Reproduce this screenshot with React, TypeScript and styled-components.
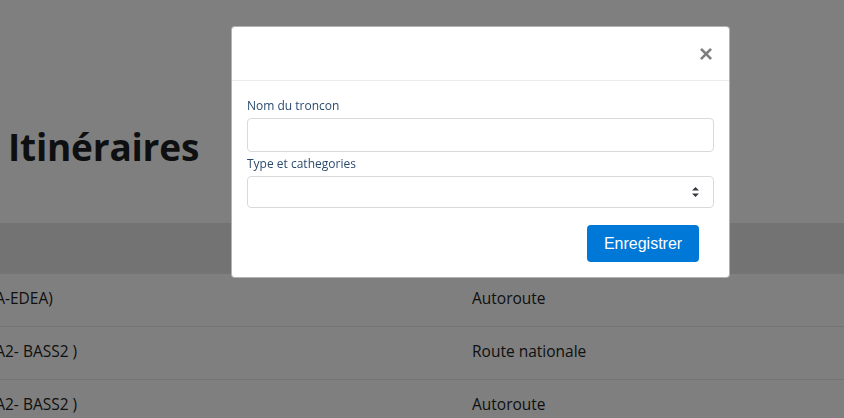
import React from 'react';
import styled, { createGlobalStyle } from 'styled-components';

const GlobalStyle = createGlobalStyle`
  html, body {
    margin: 0;
    padding: 0;
    background: #ffffff;
    overflow: hidden;
  }
  body {
    font-family: "Open Sans", "Noto Sans", sans-serif;
    color: #212529;
  }
`;

const Page = styled.div`
  width: 844px;
  height: 418px;
  overflow: hidden;
`;

const Title = styled.h1`
  margin: 0;
  padding: 119px 0 0 8px;
  height: 223px;
  box-sizing: border-box;
  font-size: 37px;
  font-weight: 700;
  line-height: 56px;
  letter-spacing: -0.2px;
  color: #1d1f22;
`;

const Table = styled.table`
  width: 100%;
  border-collapse: collapse;
  font-size: 15.5px;
`;

const HeadRow = styled.tr`
  background: #e6e6e6;
  height: 50px;
`;

const Row = styled.tr`
  height: 53px;
  border-top: 1px solid #e8e8e8;
`;

const Cell = styled.td<{ $w?: number }>`
  padding: 0 0 4px;
  width: ${(p) => (p.$w ? `${p.$w}px` : 'auto')};
  vertical-align: middle;
  white-space: nowrap;
  color: #222;
`;

// the part of the first column that lies left of the window
const Clipped = styled.span<{ $w: number }>`
  display: inline-flex;
  justify-content: flex-end;
  width: ${(p) => p.$w}px;
  overflow: hidden;
  vertical-align: bottom;
`;

const Backdrop = styled.div`
  position: fixed;
  inset: 0;
  background: rgba(0, 0, 0, 0.5);
`;

const Dialog = styled.div`
  position: fixed;
  left: 231px;
  top: 26px;
  width: 499px;
  background: #ffffff;
  border: 1px solid rgba(0, 0, 0, 0.3);
  border-radius: 4px;
  box-sizing: border-box;
`;

const DialogHeader = styled.div`
  height: 54px;
  display: flex;
  align-items: center;
  justify-content: flex-end;
  padding: 0 16px 0 15px;
  border-bottom: 1px solid #e9ecef;
  box-sizing: border-box;
`;

const Close = styled.button`
  border: 0;
  background: transparent;
  padding: 0;
  font-family: "Liberation Sans", Arial, sans-serif;
  font-size: 24px;
  font-weight: 700;
  line-height: 1;
  color: #000;
  opacity: 0.5;
  cursor: pointer;
`;

const DialogBody = styled.div`
  padding: 15px 15px 15px;
`;

const Label = styled.label`
  display: block;
  font-family: "Open Sans", "Noto Sans", sans-serif;
  font-size: 12px;
  line-height: 19px;
  color: #2b4a6f;
  margin-bottom: 3px;
`;

const Input = styled.input`
  display: block;
  width: 100%;
  height: 34px;
  box-sizing: border-box;
  border: 1px solid #d9d9d9;
  border-radius: 4px;
  margin-bottom: 2px;
`;

const Select = styled.div`
  height: 32px;
  box-sizing: border-box;
  border: 1px solid #d9d9d9;
  border-radius: 4px;
  display: flex;
  align-items: center;
  justify-content: flex-end;
  padding-right: 14px;
`;

const Footer = styled.div`
  display: flex;
  justify-content: flex-end;
  padding: 17px 15px 0 0;
`;

const Button = styled.button`
  width: 112px;
  height: 37px;
  border: 0;
  border-radius: 4px;
  background: #0078d7;
  color: #ffffff;
  font-family: "Liberation Sans", Arial, sans-serif;
  font-size: 16px;
  cursor: pointer;
`;

const rows = [
  { pre: '(DOUALA', post: '-EDEA)', type: 'Autoroute' },
  { pre: '( BONAMBA', post: '2- BASS2 )', type: 'Route nationale' },
  { pre: '( BONAMBA', post: '2- BASS2 )', type: 'Autoroute' },
];

export default function App() {
  return (
    <Page>
      <GlobalStyle />
      <Title>Itinéraires</Title>
      <Table>
        <tbody>
          <HeadRow>
            <Cell $w={472}></Cell>
            <Cell></Cell>
          </HeadRow>
          {rows.map((r, i) => (
            <Row key={i}>
              <Cell $w={472}>
                <Clipped $w={5}>{r.pre}</Clipped>
                {r.post}
              </Cell>
              <Cell>{r.type}</Cell>
            </Row>
          ))}
        </tbody>
      </Table>
      <Backdrop />
      <Dialog>
        <DialogHeader>
          <Close>×</Close>
        </DialogHeader>
        <DialogBody>
          <Label>Nom du troncon</Label>
          <Input />
          <Label>Type et cathegories</Label>
          <Select>
            <svg width="7" height="10" viewBox="0 0 7 10">
              <path d="M3.5 0 L7 3.6 L0 3.6 Z M0 6.4 L7 6.4 L3.5 10 Z" fill="#343a40" />
            </svg>
          </Select>
          <Footer>
            <Button>Enregistrer</Button>
          </Footer>
        </DialogBody>
      </Dialog>
    </Page>
  );
}
